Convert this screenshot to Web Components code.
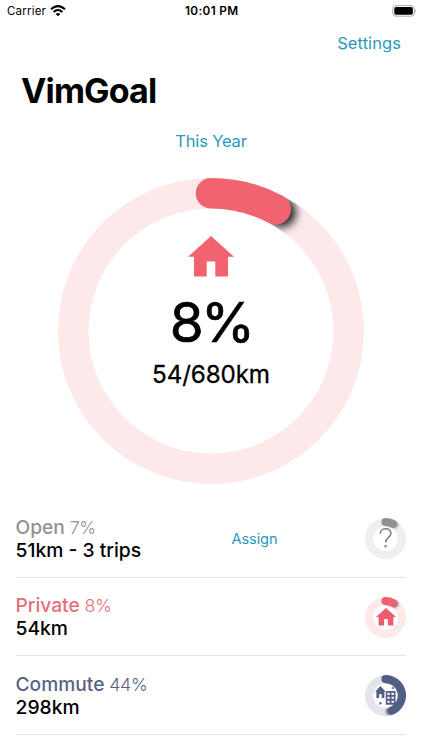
<!DOCTYPE html>
<html lang="en">
<head>
<meta charset="utf-8">
<title>VimGoal</title>
<style>
html,body{margin:0;background:#fff;overflow:hidden}
body{width:422px;height:750px;font-family:Inter,"Liberation Sans",sans-serif;color:#000}
</style>
</head>
<body>
<vim-app></vim-app>
<script>
const define=(name,html)=>customElements.define(name,class extends HTMLElement{
  connectedCallback(){
    if(this.shadowRoot)return;
    const t=document.createElement('template');
    t.innerHTML=typeof html==='function'?html(this):html;
    this.attachShadow({mode:'open'}).append(t.content.cloneNode(true));
  }
});

define('status-bar',`<style>
:host{display:grid;grid-template-columns:1fr auto 1fr;align-items:center;height:22px;padding:0 5.5px 0 7px;box-sizing:border-box;font-size:11.5px;line-height:22px}
.l{display:flex;align-items:center;gap:4px;letter-spacing:.2px}
.t{font-weight:600;font-size:11.8px;letter-spacing:.35px}
.r{display:flex;justify-content:flex-end}
svg{display:block}
</style>
<div class="l"><span>Carrier</span><svg width="16" height="12" viewBox="0 0 16 12"><g fill="none" stroke="#000" stroke-width="2.1"><path d="M1 4.3Q8-2.2 15 4.3"/><path d="M3.6 7Q8 3 12.4 7"/></g><path d="M5.7 8.9Q8 7 10.3 8.9L8 11.3Z"/></svg></div>
<div class="t">10:01 PM</div>
<div class="r"><svg width="25" height="12" viewBox="0 0 25 12"><rect x=".8" y=".6" width="21.6" height="10.6" rx="3.2" fill="none" stroke="#aaa" stroke-width="1"/><rect x="2.3" y="2.1" width="18.6" height="7.6" rx="1.8"/><path d="M23.4 4.1q1.5 1.8 0 3.6z" fill="#999"/></svg></div>`);

define('text-link',`<style>:host{display:inline-block;color:#2a9aba;font-size:16.5px;line-height:22px}</style><slot></slot>`);

const glyphs={
  house:`<path d="M23 0L46 20.8H40V40.5H27.3V25.5H18.7V40.5H6V20.8H0Z"/>`,
  question:`<path d="M1.2 5.8C1.4-.9 12-.9 12 5.2C12 9.6 6.6 9.2 6.6 14.6" fill="none" stroke="currentColor" stroke-width="1.6"/><circle cx="6.6" cy="18.3" r="1.2"/>`,
  city:`<path d="M5 0L10 5.2H8.7V11H6.2V7.6H3.8V11H1.3V5.2H0Z"/><path fill-rule="evenodd" d="M10 4.6H19V17.4H10ZM11.5 6.3V8.2H13.6V6.3ZM15.3 6.3V8.2H17.5V6.3ZM11.5 9.9V11.8H13.6V9.9ZM15.3 9.9V11.8H17.5V9.9ZM11.5 13.5V15.4H13.6V13.5ZM15.3 13.5V15.4H17.5V13.5Z"/><path d="M15.1 1.9L17.4.5V3.3ZM6.6 16L4.2 14.4V17.6Z"/>`
};
const pt=(c,r,a)=>[c+r*Math.sin(a*Math.PI/180),c-r*Math.cos(a*Math.PI/180)];
define('progress-ring',el=>{
  const n=k=>parseFloat(el.getAttribute(k));
  const s=n('size'),w=n('stroke'),a=n('angle'),blur=n('blur'),c=s/2,r=c-w/2;
  const e=pt(c,r,a),sh=pt(c,r,a+n('lead'));
  return `<style>
:host{display:grid;width:${s}px;height:${s}px;flex:none}
svg,.c{grid-area:1/1}
svg{display:block}
.c{display:flex;flex-direction:column;align-items:center}
</style>
<svg width="${s}" height="${s}" viewBox="0 0 ${s} ${s}" fill="none">
<defs><mask id="m" maskUnits="userSpaceOnUse" x="0" y="0" width="${s}" height="${s}"><circle cx="${c}" cy="${c}" r="${r}" stroke="#fff" stroke-width="${w}"/></mask>
<filter id="b" x="-100%" y="-100%" width="300%" height="300%"><feGaussianBlur stdDeviation="${blur}"/></filter></defs>
<circle cx="${c}" cy="${c}" r="${r}" stroke="${el.getAttribute('track')}" stroke-width="${w}"/>
<g mask="url(#m)"><circle cx="${sh[0]}" cy="${sh[1]}" r="${w/2-.3}" fill="#000" fill-opacity="${n('shade')}" filter="url(#b)"/></g>
<path d="M${c} ${w/2}A${r} ${r} 0 0 1 ${e[0]} ${e[1]}" stroke="${el.getAttribute('color')}" stroke-width="${w}" stroke-linecap="round"/>
</svg><div class="c"><slot></slot></div>`;
});

define('goal-icon',el=>{
  const [w,h]=el.getAttribute('size').split(' ');
  return `<style>:host{display:block}svg{display:block;fill:currentColor}</style>
<svg width="${w}" height="${h}" viewBox="${el.getAttribute('box')}" preserveAspectRatio="none">${glyphs[el.getAttribute('name')]}</svg>`;
});

define('trip-row',`<style>
:host{display:grid;grid-template-columns:216px 1fr auto;align-items:center;height:78.5px;margin:0 16px 0 15.5px;padding-top:2px;box-sizing:border-box;border-bottom:1px solid #e4e4e5}
.h{font-size:19.2px;line-height:23px;font-weight:500;color:var(--tint);white-space:nowrap}
.p{font-weight:300;font-size:17.9px;letter-spacing:-.3px;margin-left:-.4px}
.d{font-size:19.3px;line-height:23px;font-weight:500;white-space:nowrap}
</style>
<div><div class="h"><slot name="name"></slot> <span class="p"><slot name="pct"></slot></span></div><div class="d"><slot name="detail"></slot></div></div>
<div><slot name="action"></slot></div><slot name="ring"></slot>`);

define('vim-app',`<style>
:host{display:flex;flex-direction:column;width:422px;height:750px;overflow:hidden}
nav{display:flex;justify-content:flex-end;padding:10px 21px 0 0;height:32px;box-sizing:border-box;letter-spacing:.08px}
h1{margin:12px 0 0 21px;font-size:34px;line-height:49px;height:48px;font-weight:700;letter-spacing:-.85px}
.period{display:flex;justify-content:center;margin-top:16px;height:48px;letter-spacing:-.15px}
.ring{display:flex;justify-content:center;height:321px}
.main{color:#f1636f}
.big{font-size:55px;line-height:60px;color:#000;margin-top:15.5px;letter-spacing:-2.8px;-webkit-text-stroke:.7px #000}
.total{font-size:24.2px;line-height:30px;color:#000;margin-top:7.5px;font-weight:400;-webkit-text-stroke:.3px #000;letter-spacing:-.1px}
.main goal-icon{margin-top:58px}
trip-row progress-ring goal-icon{margin-top:var(--top)}
.assign{font-size:14.6px;letter-spacing:-.1px}
</style>
<status-bar></status-bar>
<nav><text-link>Settings</text-link></nav>
<h1>VimGoal</h1>
<div class="period"><text-link>This Year</text-link></div>
<div class="ring"><progress-ring class="main" size="306" stroke="30.5" angle="28" lead="2.6" blur="4" shade=".85" track="#fde8ea" color="#f1636f">
<goal-icon name="house" size="46 40.5" box="0 0 46 40.5"></goal-icon>
<div class="big">8%</div><div class="total">54/680km</div></progress-ring></div>
<trip-row style="--tint:#929292"><span slot="name">Open</span><span slot="pct">7%</span><span slot="detail">51km - 3 trips</span><text-link class="assign" slot="action">Assign</text-link>
<progress-ring slot="ring" size="41" stroke="8.2" angle="26" lead="5" blur=".8" shade=".4" track="#efefef" color="#929292" style="color:#858585;--top:10px"><goal-icon name="question" size="13.2 20" box="0 0 13.2 20"></goal-icon></progress-ring></trip-row>
<trip-row style="--tint:#e66e7b"><span slot="name">Private</span><span slot="pct">8%</span><span slot="detail">54km</span>
<progress-ring slot="ring" size="41" stroke="8.2" angle="28" lead="5" blur=".8" shade=".5" track="#fde8ea" color="#ee6170" style="color:#ea5c6c;--top:11.5px"><goal-icon name="house" size="20 17.5" box="0 0 46 40.5"></goal-icon></progress-ring></trip-row>
<trip-row style="--tint:#5a6285"><span slot="name">Commute</span><span slot="pct">44%</span><span slot="detail">298km</span>
<progress-ring slot="ring" size="41" stroke="8.2" angle="158" lead="7" blur=".9" shade=".5" track="#e3e5ec" color="#535e85" style="color:#535e85;--top:11px"><goal-icon name="city" size="20.5 19.5" box="0 0 19 18"></goal-icon></progress-ring></trip-row>`);
</script>
</body>
</html>
